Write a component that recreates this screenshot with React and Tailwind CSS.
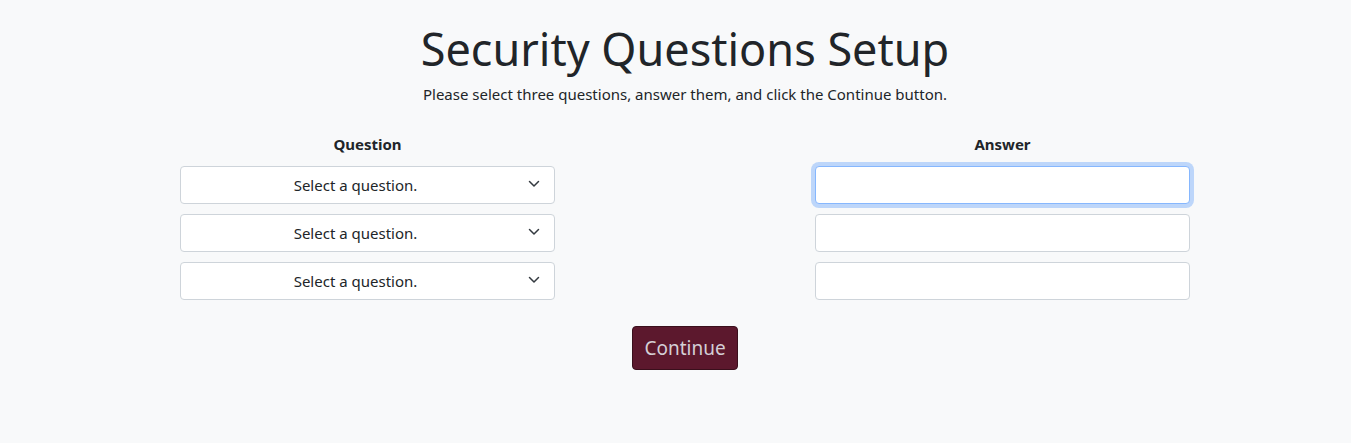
import React from 'react';

const font = { fontFamily: '"Noto Sans", "Open Sans", sans-serif' };

function QuestionSelect() {
  return (
    <div className="relative h-[38px] w-full rounded-[4px] border border-[#ced4da] bg-white">
      <div className="flex h-full items-center justify-center pl-3 pr-9 text-[15px] text-[#212529]">
        Select a question.
      </div>
      <svg className="absolute right-[14px] top-[13px]" width="12" height="8" viewBox="0 0 12 8" fill="none">
        <path d="M1.5 1.5 6 6l4.5-4.5" stroke="#343a40" strokeWidth="1.5" strokeLinecap="round" strokeLinejoin="round" />
      </svg>
    </div>
  );
}

function AnswerInput({ focused }) {
  return (
    <input
      type="text"
      className={
        focused
          ? 'h-[38px] w-full rounded-[4px] border border-[#86b7fe] bg-white outline-none ring-4 ring-[#0d6efd]/25'
          : 'h-[38px] w-full rounded-[4px] border border-[#ced4da] bg-white outline-none'
      }
    />
  );
}

export default function App() {
  return (
    <div className="min-h-[443px] w-full bg-[#f8f9fa] text-[#212529]" style={font}>
      <div className="flex flex-col items-center pl-[19px] pt-[20px]">
        <h1 className="text-[45px] leading-[58px] font-normal">Security Questions Setup</h1>
        <p className="mt-[5px] text-[15px] leading-[22px]">
          Please select three questions, answer them, and click the Continue button.
        </p>
        <div className="mt-[28px] flex w-[1010px] justify-between">
          <div className="flex w-[375px] flex-col">
            <div className="mb-[11px] text-center text-[15px] font-bold leading-[22px]">Question</div>
            <div className="flex flex-col gap-[10px]">
              <QuestionSelect />
              <QuestionSelect />
              <QuestionSelect />
            </div>
          </div>
          <div className="flex w-[375px] flex-col">
            <div className="mb-[11px] text-center text-[15px] font-bold leading-[22px]">Answer</div>
            <div className="flex flex-col gap-[10px]">
              <AnswerInput focused />
              <AnswerInput />
              <AnswerInput />
            </div>
          </div>
        </div>
        <button className="mt-[26px] h-[44px] w-[106px] rounded-[4px] border border-[#3a0f1c] bg-[#5c182d] text-[19px] text-[#d4cfd6]">
          Continue
        </button>
      </div>
    </div>
  );
}
